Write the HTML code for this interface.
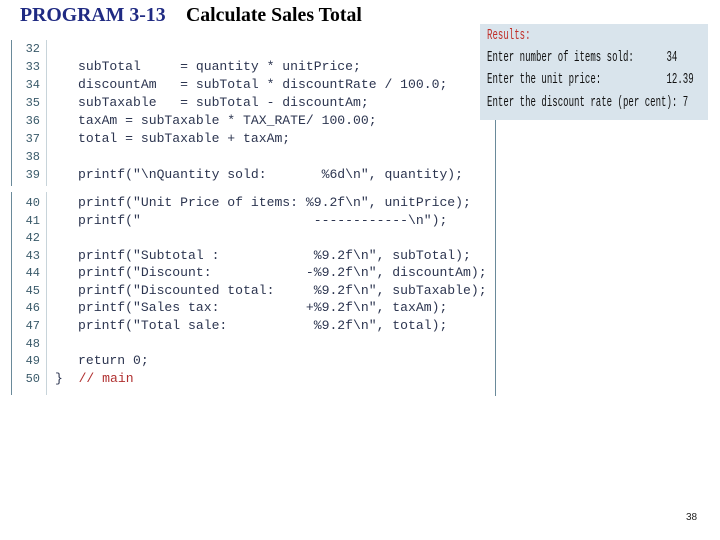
<!DOCTYPE html>
<html><head><style>
body{margin:0;width:720px;height:540px;background:#fff;position:relative;overflow:hidden}
.t{position:absolute;top:4px;left:20px;font:bold 19.8px "Liberation Serif",serif;white-space:pre}
.ln{position:absolute;left:14px;width:26px;text-align:right;font:12px "Liberation Mono",monospace;color:#3a5a6a}
.c{position:absolute;left:78px;font:13.1px "Liberation Mono",monospace;color:#2c3550;white-space:pre}
.bar{position:absolute;background:#6a8a9a}
.res{position:absolute;left:480px;top:24px;width:228px;height:96px;background:#d9e4ec}
.r{position:absolute;left:7px;font:14.5px "Liberation Mono",monospace;color:#111;white-space:pre;transform:scaleX(0.625);transform-origin:left}
</style></head><body>
<div class="t"><span style="color:#1f2a82">PROGRAM 3-13</span>  <span style="color:#000;position:absolute;left:166px">Calculate Sales Total</span></div>
<div class="bar" style="left:11px;top:40px;width:1px;height:146px"></div>
<div class="bar" style="left:11px;top:192px;width:1px;height:203px"></div>
<div class="bar" style="left:46px;top:40px;width:1px;height:146px;background:#c8d4da"></div>
<div class="bar" style="left:46px;top:192px;width:1px;height:203px;background:#c8d4da"></div>
<div class="bar" style="left:495px;top:120px;width:1px;height:276px"></div>
<div class="res">
<div class="r" style="top:4px;color:#c0302a">Results:</div>
<div class="r" style="top:26px">Enter number of items sold:      34</div>
<div class="r" style="top:48px">Enter the unit price:            12.39</div>
<div class="r" style="top:71px">Enter the discount rate (per cent): 7</div>
</div>
<div class="ln" style="top:42px">32</div>
<div class="ln" style="top:60px">33</div><div class="c" style="top:59px">subTotal     = quantity * unitPrice;</div>
<div class="ln" style="top:78px">34</div><div class="c" style="top:77px">discountAm   = subTotal * discountRate / 100.0;</div>
<div class="ln" style="top:96px">35</div><div class="c" style="top:95px">subTaxable   = subTotal - discountAm;</div>
<div class="ln" style="top:114px">36</div><div class="c" style="top:113px">taxAm = subTaxable * TAX_RATE/ 100.00;</div>
<div class="ln" style="top:132px">37</div><div class="c" style="top:131px">total = subTaxable + taxAm;</div>
<div class="ln" style="top:150px">38</div>
<div class="ln" style="top:168px">39</div><div class="c" style="top:167px">printf("\nQuantity sold:       %6d\n", quantity);</div>
<div class="ln" style="top:196px">40</div><div class="c" style="top:195px">printf("Unit Price of items: %9.2f\n", unitPrice);</div>
<div class="ln" style="top:214px">41</div><div class="c" style="top:213px">printf("                      ------------\n");</div>
<div class="ln" style="top:231px">42</div>
<div class="ln" style="top:249px">43</div><div class="c" style="top:248px">printf("Subtotal :            %9.2f\n", subTotal);</div>
<div class="ln" style="top:266px">44</div><div class="c" style="top:265px">printf("Discount:            -%9.2f\n", discountAm);</div>
<div class="ln" style="top:284px">45</div><div class="c" style="top:283px">printf("Discounted total:     %9.2f\n", subTaxable);</div>
<div class="ln" style="top:301px">46</div><div class="c" style="top:300px">printf("Sales tax:           +%9.2f\n", taxAm);</div>
<div class="ln" style="top:319px">47</div><div class="c" style="top:318px">printf("Total sale:           %9.2f\n", total);</div>
<div class="ln" style="top:337px">48</div>
<div class="ln" style="top:354px">49</div><div class="c" style="top:353px">return 0;</div>
<div class="ln" style="top:372px">50</div><div class="c" style="top:371px;left:55px">}  <span style="color:#b03030">// main</span></div>
<div style="position:absolute;left:686px;top:512px;font:10px 'Liberation Sans',sans-serif;color:#222">38</div>
</body></html>
